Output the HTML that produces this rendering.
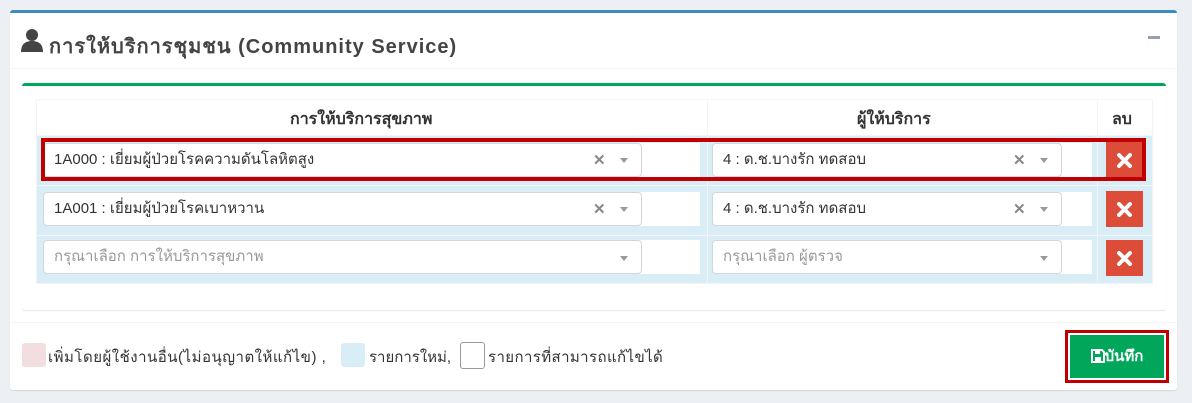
<!DOCTYPE html>
<html><head><meta charset="utf-8"><style>
*{box-sizing:border-box;margin:0;padding:0}
body{width:1192px;height:403px;background:#ecf0f5;font-family:"Liberation Sans","Noto Sans CJK SC",sans-serif;position:relative;overflow:hidden;color:#333}
.a{position:absolute}
.box{left:10px;top:10px;width:1167px;height:380px;background:#fff;border-top:3px solid #3c8dbc;border-radius:3px;box-shadow:0 1px 1px rgba(0,0,0,.1)}
.sel{position:absolute;background:#fff;border:1px solid #d2d6de;border-radius:4px;height:34px;font-size:15px;line-height:32px;padding-left:10px}
.x{position:absolute;color:#888;font-size:15px;font-weight:bold}
.arr{position:absolute;width:0;height:0;border-left:4px solid transparent;border-right:4px solid transparent;border-top:5px solid #999}
.del{position:absolute;left:1106px;width:37px;height:36px;background:#dd4b39}
.del svg{position:absolute;left:11px;top:11px}
.wh{position:absolute;background:#fff;height:34px}
</style></head><body>
<div class="a box"></div>
<svg class="a" style="left:20px;top:28px" width="24" height="24" viewBox="0 0 24 24"><circle cx="12" cy="7" r="6" fill="#444"/><path d="M1 24 Q1 13 12 13 Q23 13 23 24Z" fill="#444"/></svg>
<div class="a" style="left:49px;top:30px;font-size:20px;font-weight:bold;color:#444;letter-spacing:1px">การให้บริการชุมชน (Community Service)</div>
<div class="a" style="left:1148px;top:36px;width:12px;height:3px;background:#97a0b3"></div>
<div class="a" style="left:10px;top:68px;width:1167px;height:1px;background:#f4f4f4"></div>
<div class="a" style="left:22px;top:83px;width:1144px;height:227px;background:#fff;border-top:3px solid #00a65a;border-radius:3px;box-shadow:0 1px 1px rgba(0,0,0,.1)"></div>
<div class="a" style="left:36px;top:99px;width:1117px;height:185px;background:#d9edf7;border:1px solid #f4f4f4"></div>
<div class="a" style="left:36px;top:99px;width:1117px;height:37px;background:#fff;border:1px solid #f4f4f4"></div>
<div class="a" style="left:707px;top:99px;width:1px;height:185px;background:#f4f4f4"></div>
<div class="a" style="left:1097px;top:99px;width:1px;height:185px;background:#f4f4f4"></div>
<div class="a" style="left:36px;top:185px;width:1117px;height:1px;background:#f4f4f4"></div>
<div class="a" style="left:36px;top:235px;width:1117px;height:1px;background:#f4f4f4"></div>
<div class="a" style="left:290px;top:107px;font-size:16px;font-weight:bold">การให้บริการสุขภาพ</div>
<div class="a" style="left:857px;top:107px;font-size:16px;font-weight:bold">ผู้ให้บริการ</div>
<div class="a" style="left:1112px;top:107px;font-size:16px;font-weight:bold">ลบ</div>

<!-- row1 -->
<div class="wh" style="left:600px;top:143px;width:100px"></div><div class="wh" style="left:1020px;top:143px;width:72px"></div>
<div class="sel" style="left:43px;top:143px;width:599px">1A000 : เยี่ยมผู้ป่วยโรคความดันโลหิตสูง</div>
<div class="x" style="left:593px;top:151px">✕</div><div class="arr" style="left:620px;top:158px"></div>
<div class="sel" style="left:712px;top:143px;width:350px">4 : ด.ช.บางรัก ทดสอบ</div>
<div class="x" style="left:1013px;top:151px">✕</div><div class="arr" style="left:1040px;top:158px"></div>
<div class="del" style="top:142px"><svg width="15" height="15" viewBox="0 0 15 15"><path d="M2 2L13 13M13 2L2 13" stroke="#fff" stroke-width="4" stroke-linecap="round"/></svg></div>
<div class="a" style="left:41px;top:138px;width:1105px;height:43px;border:4px solid #c00000"></div>
<!-- row2 -->
<div class="wh" style="left:600px;top:192px;width:100px"></div><div class="wh" style="left:1020px;top:192px;width:72px"></div>
<div class="sel" style="left:43px;top:192px;width:599px">1A001 : เยี่ยมผู้ป่วยโรคเบาหวาน</div>
<div class="x" style="left:593px;top:200px">✕</div><div class="arr" style="left:620px;top:207px"></div>
<div class="sel" style="left:712px;top:192px;width:350px">4 : ด.ช.บางรัก ทดสอบ</div>
<div class="x" style="left:1013px;top:200px">✕</div><div class="arr" style="left:1040px;top:207px"></div>
<div class="del" style="top:191px"><svg width="15" height="15" viewBox="0 0 15 15"><path d="M2 2L13 13M13 2L2 13" stroke="#fff" stroke-width="4" stroke-linecap="round"/></svg></div>
<!-- row3 -->
<div class="wh" style="left:600px;top:240px;width:100px"></div><div class="wh" style="left:1020px;top:240px;width:72px"></div>
<div class="sel" style="left:43px;top:240px;width:599px;color:#999">กรุณาเลือก การให้บริการสุขภาพ</div>
<div class="arr" style="left:620px;top:256px"></div>
<div class="sel" style="left:712px;top:240px;width:350px;color:#999">กรุณาเลือก ผู้ตรวจ</div>
<div class="arr" style="left:1040px;top:256px"></div>
<div class="del" style="top:240px"><svg width="15" height="15" viewBox="0 0 15 15"><path d="M2 2L13 13M13 2L2 13" stroke="#fff" stroke-width="4" stroke-linecap="round"/></svg></div>

<div class="a" style="left:10px;top:322px;width:1167px;height:1px;background:#f4f4f4"></div>
<div class="a" style="left:22px;top:343px;width:24px;height:24px;background:#f2dede;border-radius:3px"></div>
<div class="a" style="left:48px;top:345px;font-size:15px;letter-spacing:0.5px">เพิ่มโดยผู้ใช้งานอื่น(ไม่อนุญาตให้แก้ไข) ,</div>
<div class="a" style="left:341px;top:343px;width:24px;height:24px;background:#d9edf7;border-radius:3px"></div>
<div class="a" style="left:369px;top:345px;font-size:15px">รายการใหม่,</div>
<div class="a" style="left:460px;top:342px;width:25px;height:27px;border:1px solid #999;border-radius:3px"></div>
<div class="a" style="left:488px;top:345px;font-size:15px;letter-spacing:0.4px">รายการที่สามารถแก้ไขได้</div>
<div class="a" style="left:1065px;top:330px;width:104px;height:53px;border:3px solid #c00000;background:#fff;padding:2px">
<div style="background:#00a65a;height:43px;color:#fff;font-weight:bold;font-size:15px;line-height:43px;text-align:center"><svg width="14" height="14" viewBox="0 0 14 14" style="vertical-align:-2px"><path d="M1 1H11L13 3V13H1Z" fill="none" stroke="#fff" stroke-width="2"/><rect x="4" y="2" width="5" height="3" fill="#fff"/><rect x="4" y="8" width="6" height="4" fill="#fff"/></svg>บันทึก</div></div>
</body></html>
